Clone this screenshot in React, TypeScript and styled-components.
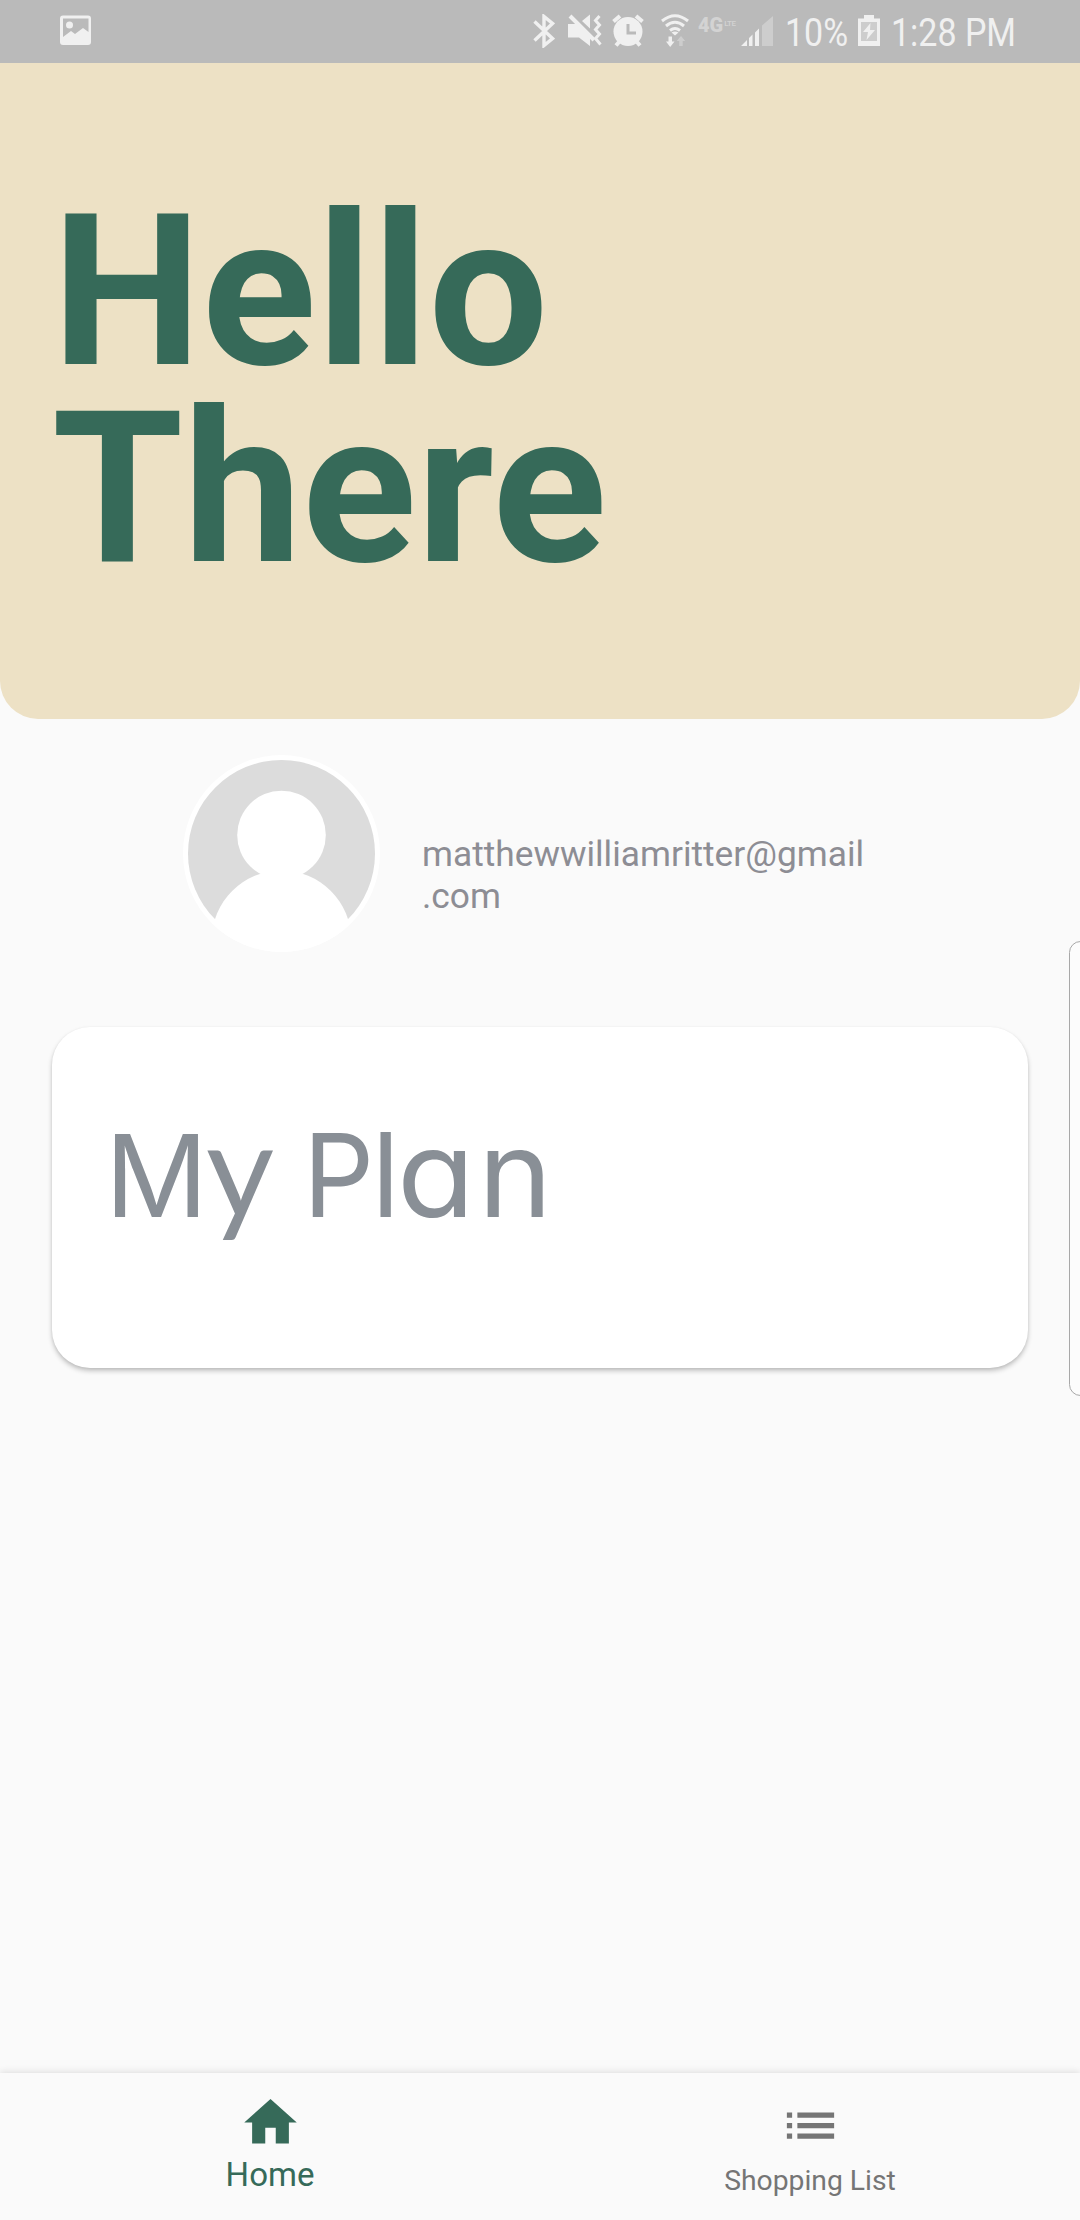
import React from "react";
import styled, { createGlobalStyle, css } from "styled-components";

const Global = createGlobalStyle`
  * { box-sizing: border-box; }
  body { margin: 0; background: #fafafa; font-family: Roboto, sans-serif; }
  svg { display: block; flex: none; }
`;

const Screen = styled.div`
  position: relative;
  width: 1080px;
  height: 2220px;
  display: flex;
  flex-direction: column;
  background: #fafafa;
  overflow: hidden;
`;

const StatusBar = styled.div`
  height: 63px;
  flex: none;
  display: flex;
  align-items: flex-start;
  padding: 14px 0 0 60px;
  background: #bababa;
  color: #f0f0f0;
`;

const StatusIcon = styled.svg<{ $w: number; $gap: number }>`
  width: ${(p) => p.$w}px;
  height: 34px;
  margin-left: ${(p) => p.$gap}px;
  fill: currentColor;
`;

const StatusText = styled.div<{ $w: number; $gap: number }>`
  width: ${(p) => p.$w}px;
  margin: -1px 0 0 ${(p) => p.$gap}px;
  font-size: 39.5px;
  line-height: 40px;
  white-space: nowrap;
  transform: scaleX(0.86);
  transform-origin: left;
`;

const Network = styled.div`
  width: 37px;
  margin-left: 9px;
  padding-top: 1px;
  display: flex;
  gap: 1px;
  font-size: 20px;
  line-height: 20px;
  font-weight: 900;
  color: #d3d3d3;
`;

const Lte = styled.span`
  font-size: 8px;
  line-height: 18px;
  font-weight: 500;
  letter-spacing: -0.5px;
`;

const Header = styled.header`
  height: 656px;
  flex: none;
  padding: 130px 0 0 52px;
  background: #ede1c5;
  border-radius: 0 0 38px 38px;
`;

const Greeting = styled.h1`
  margin: 0;
  font-size: 212px;
  line-height: 197px;
  font-weight: 700;
  color: #366a59;
`;

const Profile = styled.section`
  flex: none;
  display: flex;
  align-items: flex-start;
  padding: 35px 0 0 182px;
  height: 308px;
`;

const Email = styled.div`
  margin: 79px 0 0 41px;
  width: 450px;
  font-size: 35.3px;
  line-height: 42px;
  color: #8d8d94;
`;

const PlanCard = styled.section`
  flex: none;
  margin: 0 52px;
  height: 341px;
  padding: 73px 0 0 53px;
  background: #fff;
  border-radius: 38px;
  box-shadow: 0 3px 5px rgba(0, 0, 0, 0.22), 0 1px 3px rgba(0, 0, 0, 0.06);
`;

const PlanTitle = styled.h2`
  margin: 0;
  font-family: Inter, sans-serif;
  font-feature-settings: "cv11";
  font-weight: 400;
  font-size: 114px;
  line-height: 140px;
  color: #898f96;
  white-space: nowrap;
`;

const Letter = styled.span<{ $size: number; $gap?: number; $track?: number; $stretch?: number; $lato?: boolean }>`
  display: inline-block;
  font-size: ${(p) => p.$size}px;
  line-height: 1;
  margin-left: ${(p) => p.$gap ?? 0}px;
  letter-spacing: ${(p) => p.$track ?? 0}px;
  transform: scaleX(${(p) => p.$stretch ?? 1});
  transform-origin: left;
  ${(p) => p.$lato && css`font-family: Lato, sans-serif;`}
`;

const EdgePanel = styled.div`
  position: absolute;
  top: 941px;
  right: -12px;
  width: 23px;
  height: 455px;
  border: 1.5px solid #a8a8a8;
  border-radius: 15px;
  background: #fcfcfc;
`;

const BottomNav = styled.nav`
  flex: none;
  height: 147px;
  margin-top: auto;
  display: flex;
  background: #fafafa;
  box-shadow: 0 -1px 7px rgba(0, 0, 0, 0.12);
`;

const NavItem = styled.div<{ $active?: boolean }>`
  flex: 1;
  display: flex;
  flex-direction: column;
  align-items: center;
  color: #757575;
  font-size: 28.3px;
  line-height: 34px;
  padding-top: 21px;
  gap: 7px;
  svg { width: 63px; height: 63px; fill: currentColor; }
  ${(p) =>
    p.$active &&
    css`
      color: #366a59;
      font-size: 33px;
      line-height: 38px;
      padding-top: 18px;
      gap: 2px;
    `}
`;

const Avatar = () => (
  <svg width="199" height="199" viewBox="-99.5 -99.5 199 199">
    <clipPath id="face"><circle r="98.5" /></clipPath>
    <circle r="98.5" fill="#fff" />
    <circle r="93.5" fill="#dcdcdc" />
    <g clipPath="url(#face)" fill="#fff">
      <circle cy="-18.5" r="44.3" />
      <circle cy="86.8" r="69.8" />
    </g>
  </svg>
);

export default function App() {
  return (
    <>
      <Global />
      <Screen>
        <StatusBar>
          <StatusIcon $w={31} $gap={0} viewBox="0 0 31 34">
            <path fillRule="evenodd" d="M3 1.5h25a3 3 0 0 1 3 3v23.500a3 3 0 0 1-3 3H3a3 3 0 0 1-3-3V4.500a3 3 0 0 1 3-3zM3 4.500V23l8-6 4 3 8-6 5.500 4V4.500z" />
            <circle cx="9.500" cy="11" r="3.500" />
          </StatusIcon>
          <StatusIcon $w={22} $gap={442} viewBox="0 0 22 34">
            <path fill="none" stroke="currentColor" strokeWidth="3.400" d="M1.500 7.500l18 17-8.500 7V2.500l8.500 7-18 17" />
          </StatusIcon>
          <StatusIcon $w={34} $gap={13} viewBox="0 0 34 34">
            <path d="M0 10h9l13 13v9L11 23.500H0zM14 7l8-6.500v14z" />
            <path fill="none" stroke="currentColor" strokeWidth="4" d="M2 2L26 26" />
            <path fill="none" stroke="currentColor" strokeWidth="3" d="M31.500 2l-4 4.500 4 4.500-4 4.500 4 4.500-4 4.500 5 6" />
          </StatusIcon>
          <StatusIcon $w={32} $gap={10} viewBox="0 0 32 34">
            <circle cx="16" cy="17.500" r="14.500" />
            <path fill="none" stroke="currentColor" strokeWidth="4" d="M1.500 7.500L8 2M24 2l6.500 5.500M7 28l-3 3.500M25 28l3 3.500" />
            <path fill="none" stroke="#bababa" strokeWidth="3" d="M16 10v9h8" />
          </StatusIcon>
          <StatusIcon $w={28} $gap={17} viewBox="0 0 28 34">
            <path fill="none" stroke="currentColor" strokeWidth="3" d="M1 7q13-10.500 26 0M5 12q9-7.500 18 0M9 16.500q5-4 10 0" />
            <path d="M10.500 18.500q3.500-2 7 0L14 21.500zM7.500 22.500h3.500v5h2.500L9.200 33 5 27.500h2.500z" />
            <path opacity=".35" d="M18.200 32h3.500v-5h2.500L20 22l-4.300 5h2.500z" />
          </StatusIcon>
          <Network>4G<Lte>LTE</Lte></Network>
          <StatusIcon $w={32} $gap={6} viewBox="0 0 32 34">
            <path d="M0 32l6-6V32zM8 24l3.500-3.500V32H8zM14 18.500l4-4V32h-4z" />
            <path opacity=".35" d="M21 11.500L32 2v30H21z" />
          </StatusIcon>
          <StatusText $w={60} $gap={12}>10%</StatusText>
          <StatusIcon $w={22} $gap={13} viewBox="0 0 22 34">
            <path fillRule="evenodd" d="M6 1h10v3.500h6v27.500H0V4.500h6zM3 8v19h16V8z" />
            <path opacity=".35" d="M3 8h16v19H3z" />
            <path d="M12.500 9L5 18h5l-1.500 8L17 16h-5z" />
          </StatusIcon>
          <StatusText $w={130} $gap={11}>1:28 PM</StatusText>
        </StatusBar>
        <Header>
          <Greeting>Hello<br />There</Greeting>
        </Header>
        <Profile>
          <Avatar />
          <Email>matthewwilliamritter@gmail<br />.com</Email>
        </Profile>
        <PlanCard>
          <PlanTitle>
            M<Letter $lato $size={132} $gap={-2}>y</Letter>{" "}
            <Letter $size={115} $gap={-3} $track={-5} $stretch={0.97}>P</Letter><Letter $size={117}>l</Letter><Letter $size={121} $gap={-3} $stretch={1.05}>a</Letter><Letter $size={121} $gap={7} $stretch={1.04}>n</Letter>
          </PlanTitle>
        </PlanCard>
        <BottomNav>
          <NavItem $active>
            <svg viewBox="0 0 24 24"><path d="M10 20v-6h4v6h5v-8h3L12 3 2 12h3v8z" /></svg>
            Home
          </NavItem>
          <NavItem>
            <svg viewBox="0 0 24 24"><path d="M3 13h2v-2H3zm0 4h2v-2H3zm0-8h2V7H3zm4 4h14v-2H7zm0 4h14v-2H7zM7 7v2h14V7z" /></svg>
            Shopping List
          </NavItem>
        </BottomNav>
        <EdgePanel />
      </Screen>
    </>
  );
}
